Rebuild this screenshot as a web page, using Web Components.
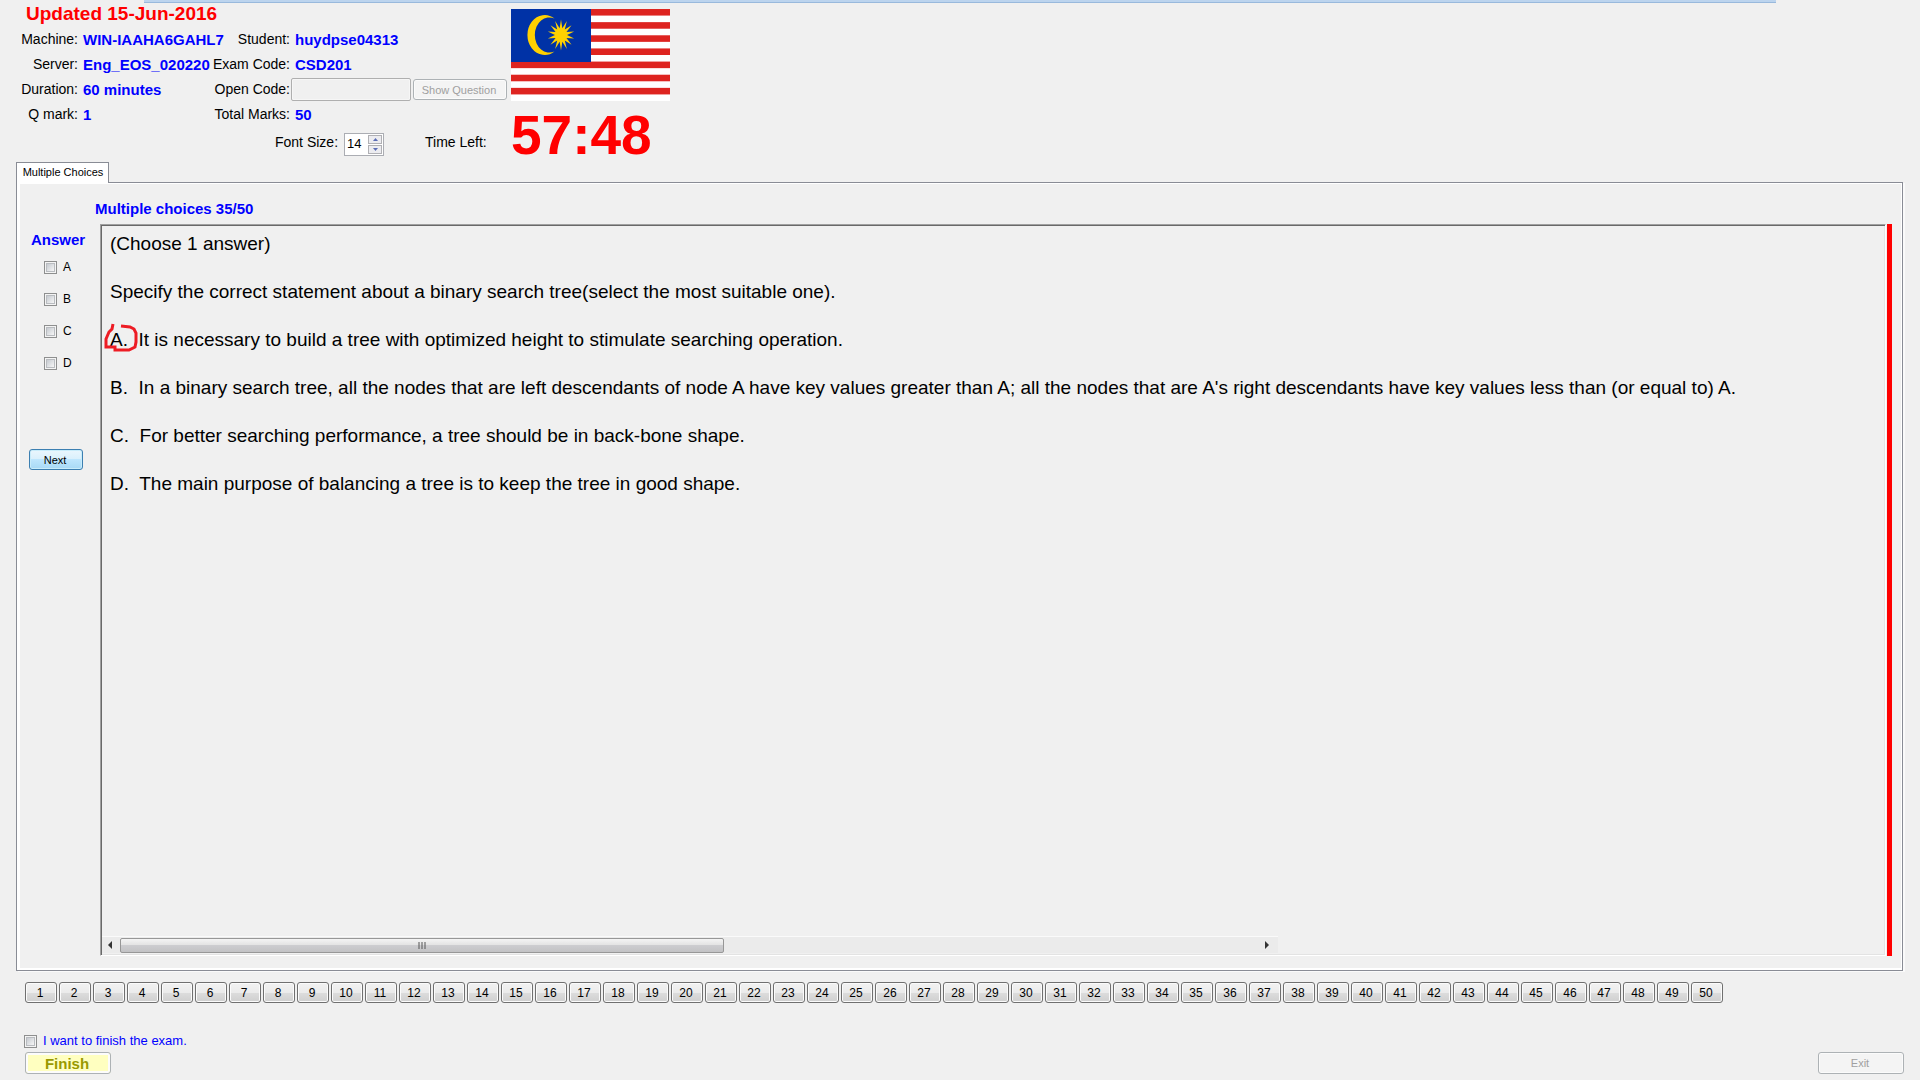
<!DOCTYPE html>
<html lang="en">
<head>
<meta charset="utf-8">
<title>Exam client</title>
<style>
  html { background: #f0f0f0; }
  body { margin: 0; font-family: "Liberation Sans", Arial, sans-serif; font-size: 14px; color: #000; }
</style>
</head>
<body>
<exam-app></exam-app>

<script>
const define = (name, html, setup) => {
  const template = document.createElement('template');
  template.innerHTML = html;
  customElements.define(name, class extends HTMLElement {
    constructor() {
      super();
      this.attachShadow({ mode: 'open' }).append(template.content.cloneNode(true));
    }
    connectedCallback() {
      if (setup && !this.ready) { this.ready = true; setup(this, this.shadowRoot); }
    }
  });
};

/* Glossy push button; kind = normal | primary | finish | ghost */
define('exam-button', `
<style>
  :host { display: inline-flex; height: 21px; }
  button {
    flex: 1; box-sizing: border-box; padding: 0 2px 0 0; font: 12px "Liberation Sans", Arial, sans-serif; color: #000;
    border: 1px solid #707070; border-radius: 3px; box-shadow: inset 0 0 0 1px #fbfbfb;
    background: linear-gradient(#f2f2f2, #ebebeb 50%, #dddddd 50%, #cfcfcf);
  }
  :host([kind=primary]) button {
    border-color: #3c7fb1; box-shadow: inset 0 0 0 1px #c8ecfa; font-size: 11px;
    background: linear-gradient(#eaf6fd, #d9f0fc 50%, #bee6fd 50%, #a7d9f5);
  }
  :host([kind=ghost]) button { border-color: #adb2b5; background: #f4f4f4; color: #a0a0a0; font-size: 11px; }
  :host([kind=finish]) button {
    border-color: #adb2b5; background: #ffffc0; color: #999900; font-size: 15px; font-weight: bold;
    box-shadow: inset 0 0 0 2px #fcfcfc;
  }
</style>
<button type="button"><slot></slot></button>`,
(host, root) => { root.querySelector('button').disabled = host.hasAttribute('disabled'); });

define('exam-check', `
<style>
  :host { display: block; }
  label { display: flex; align-items: center; gap: 6px; line-height: 16px; }
  input {
    appearance: none; margin: 0; width: 13px; height: 13px; box-sizing: border-box;
    border: 1px solid #8e8f8f; background: linear-gradient(135deg, #c6cad0, #f6f6f6) content-box, #f4f4f4; padding: 2px;
    box-shadow: inset 0 0 0 1px #f4f4f4, inset 0 0 0 2px #b9bcc0;
  }
</style>
<label><input type="checkbox"><span><slot></slot></span></label>`);

define('malaysia-flag', `
<style>
  :host { display: block; width: 159px; height: 92px; }
  svg { display: block; width: 100%; height: 100%; }
</style>
<svg viewBox="0 0 159 92" role="img" aria-label="Flag of Malaysia">
  <rect width="159" height="92" fill="#fff"/>
  <g id="stripes" fill="#de2420"></g>
  <rect width="80" height="53" fill="#0032a6"/>
  <path fill="#ffd100" d="M43.500 9.500A17.300 20 0 1 0 43.500 42.500A14.600 17.600 0 1 1 43.500 9.500Z"/>
  <polygon id="star" fill="#ffd100"/>
</svg>`,
(host, root) => {
  const stripes = root.getElementById('stripes');
  for (let i = 0; i < 7; i++) {
    const r = document.createElementNS('http://www.w3.org/2000/svg', 'rect');
    r.setAttribute('width', 159);
    r.setAttribute('height', 92 / 14);
    r.setAttribute('y', i * 92 / 7);
    stripes.append(r);
  }
  const points = [];
  for (let i = 0; i < 28; i++) {
    const k = i % 2 ? 0.45 : 1, a = i * Math.PI / 14;
    points.push((50 + 13.5 * k * Math.sin(a)).toFixed(2) + ',' + (26 - 15.5 * k * Math.cos(a)).toFixed(2));
  }
  root.getElementById('star').setAttribute('points', points.join(' '));
});

define('font-spinner', `
<style>
  :host { display: flex; box-sizing: border-box; width: 40px; height: 23px; border: 1px solid #abadb3; background: #fff; padding: 1px; }
  input {
    appearance: textfield; flex: 1; min-width: 0; border: 0; padding: 0 0 2px 1px; margin: 0; background: none;
    font: 13px "Liberation Sans", Arial, sans-serif; color: #000;
  }
  input::-webkit-inner-spin-button { display: none; }
  div { display: flex; flex-direction: column; gap: 1px; width: 14px; }
  button { flex: 1; padding: 0; border: 1px solid #b0b0b4; background: #ececf0; display: flex; align-items: center; justify-content: center; }
  svg { display: block; width: 5px; height: 3px; fill: #5b6db5; }
</style>
<input type="number" value="14" aria-label="Font size">
<div>
  <button type="button" aria-label="Increase"><svg viewBox="0 0 5 3"><path d="M0 3L2.500 0L5 3Z"/></svg></button>
  <button type="button" aria-label="Decrease"><svg viewBox="0 0 5 3"><path d="M0 0L2.500 3L5 0Z"/></svg></button>
</div>`);

define('exam-header', `
<style>
  :host { display: flex; }
  .info { width: 511px; }
  .strip {
    position: absolute; top: 0; left: 144px; right: 144px; height: 2px;
    background: #bcd4ee; border-bottom: 1px solid #99b9dc;
  }
  h1 { margin: 0; padding-left: 26px; font-size: 19px; line-height: 27px; color: #f00; }
  .grid { display: grid; grid-template-columns: 78px 134px 78px 1fr; grid-auto-rows: 25px; line-height: 25px; white-space: nowrap; }
  .grid > span { text-align: right; }
  .grid > b { padding-left: 5px; font-size: 15px; color: #00f; min-width: 0; }
  .clip { overflow: hidden; }
  .grid label { text-align: right; }
  .code { display: flex; align-items: center; gap: 2px; padding-left: 1px; }
  .code input {
    box-sizing: border-box; width: 120px; height: 23px; border: 1px solid #afafaf; border-radius: 2px;
    background: #f0f0f0; box-shadow: inset 0 0 0 1px #f6f6f6;
  }
  .code exam-button { width: 94px; }
  .size { display: flex; align-items: center; height: 35px; padding-left: 275px; }
  .size > span { line-height: 30px; align-self: flex-start; }
  .size font-spinner { margin: 0 41px 0 6px; }
  .side { padding-top: 9px; }
  time { display: block; font-size: 55px; line-height: 61px; height: 61px; font-weight: bold; color: #f00; padding-top: 4px; box-sizing: border-box; }
</style>
<div class="strip"></div>
<div class="info">
  <h1>Updated 15-Jun-2016</h1>
  <div class="grid">
    <span>Machine:</span><b>WIN-IAAHA6GAHL7</b><span>Student:</span><b>huydpse04313</b>
    <span>Server:</span><b class="clip">Eng_EOS_020220</b><span>Exam Code:</span><b>CSD201</b>
    <span>Duration:</span><b>60 minutes</b><label for="code">Open Code:</label>
    <div class="code"><input id="code" type="text" disabled><exam-button kind="ghost" disabled>Show Question</exam-button></div>
    <span>Q mark:</span><b>1</b><span>Total Marks:</span><b>50</b>
  </div>
  <div class="size"><span>Font Size:</span><font-spinner></font-spinner><span>Time Left:</span></div>
</div>
<div class="side">
  <malaysia-flag></malaysia-flag>
  <time>57:48</time>
</div>`);

define('answer-panel', `
<style>
  :host { display: flex; flex-direction: column; }
  h2 { margin: 0 0 1px; padding-left: 11px; font-size: 15px; line-height: 20px; color: #00f; }
  exam-check { padding: 8px 0 8px 24px; font-size: 12px; }
  exam-button { width: 54px; margin: 70px 0 0 9px; }
</style>
<h2>Answer</h2>
<exam-check>A</exam-check>
<exam-check>B</exam-check>
<exam-check>C</exam-check>
<exam-check>D</exam-check>
<exam-button kind="primary">Next</exam-button>`);

define('scroll-strip', `
<style>
  :host { display: flex; align-items: center; box-sizing: border-box; width: 66%; height: 17px; background: #ebebeb; border-top: 1px solid #fafafa; }
  .arrow { flex: none; display: block; width: 18px; height: 8px; fill: #333; }
  .track { flex: 1; display: flex; }
  .thumb {
    box-sizing: border-box; width: 53%; height: 15px; border: 1px solid #979797; border-radius: 2px;
    background: linear-gradient(#f4f4f4, #e4e4e4 45%, #cdcdd0 50%, #c2c2c4);
    display: flex; align-items: center; justify-content: center;
  }
  .thumb svg { width: 8px; height: 7px; }
</style>
<svg class="arrow" viewBox="0 0 18 8"><path d="M6 4L10 0V8Z"/></svg>
<div class="track"><div class="thumb"><svg viewBox="0 0 8 7"><path d="M1 0V7M4 0V7M7 0V7" stroke="#555"/></svg></div></div>
<svg class="arrow" viewBox="0 0 18 8"><path d="M9 4L5 0V8Z"/></svg>`);

define('question-view', `
<style>
  :host {
    display: flex; flex-direction: column; justify-content: space-between; box-sizing: border-box;
    border: 1px solid #a0a0a0; border-right-color: #fff; border-bottom-color: #fff;
    box-shadow: inset 1px 1px #696969, inset -1px -1px #e3e3e3;
    padding: 1px 1px 2px;
  }
  .text { padding: 6px 8px; font-size: 19px; line-height: 24px; white-space: pre-wrap; }
  p { margin: 0 0 24px; }
  .marked { position: relative; }
  .marked svg { position: absolute; left: -6px; top: -6px; width: 36px; height: 32px; fill: none; stroke: #ed1c24; stroke-width: 3; }
</style>
<div class="text"><p>(Choose 1 answer)</p><p>Specify the correct statement about a binary search tree(select the most suitable one).</p><p class="marked">A.  It is necessary to build a tree with optimized height to stimulate searching operation.<svg viewBox="0 0 36 32" aria-hidden="true"><path d="M9 2L8 7L5 10L2 17V25H11V28H25L31 25L32 20V11L30 7L26 5L17 4"/></svg></p><p>B.  In a binary search tree, all the nodes that are left descendants of node A have key values greater than A; all the nodes that are A's right descendants have key values less than (or equal to) A.</p><p>C.  For better searching performance, a tree should be in back-bone shape.</p><p>D.  The main purpose of balancing a tree is to keep the tree in good shape.</p></div>
<scroll-strip></scroll-strip>`);

define('exam-tabs', `
<style>
  :host { display: flex; flex-direction: column; padding: 0 17px 0 16px; }
  .tab {
    position: relative; align-self: flex-start; box-sizing: border-box; width: 93px; height: 21px; margin-bottom: -1px; padding: 0 0 2px 1px;
    border: 1px solid #898c95; border-bottom: 0; background: #fff; font: 11px "Liberation Sans", Arial, sans-serif; color: #000;
  }
  .panel {
    flex: 1; display: flex; flex-direction: column; padding: 15px 10px 14px 0;
    border: 1px solid #898c95; box-shadow: inset 3px 0 #fff, inset -1px 0 #fff, inset 0 1px #fff, inset 0 -2px #fff, 2px 1px #fafafa;
  }
  h2 { margin: 0; padding: 1px 0 5px 78px; font-size: 15px; line-height: 20px; color: #00f; }
  .body { flex: 1; display: flex; }
  answer-panel { flex: none; width: 80px; padding: 6px 0 0 3px; }
  question-view { flex: 1; }
  .bar { flex: none; width: 5px; margin-left: 1px; background: #f00; }
</style>
<button class="tab" type="button" role="tab" aria-selected="true">Multiple Choices</button>
<section class="panel">
  <h2>Multiple choices 35/50</h2>
  <div class="body">
    <answer-panel></answer-panel>
    <question-view></question-view>
    <div class="bar"></div>
  </div>
</section>`);

define('question-nav', `
<style>
  :host { display: flex; flex-wrap: wrap; gap: 2px; padding: 11px 25px 0; }
  exam-button { width: 32px; }
</style>`,
(host, root) => {
  for (let i = 1; i <= Number(host.getAttribute('count')); i++) {
    const b = document.createElement('exam-button');
    b.textContent = i;
    root.append(b);
  }
});

define('exam-footer', `
<style>
  :host { display: block; padding: 30px 16px 6px 24px; }
  exam-check { color: #00f; font-size: 13px; padding-bottom: 3px; }
  .row { display: flex; justify-content: space-between; padding-left: 1px; }
  exam-button { width: 86px; height: 22px; }
</style>
<exam-check>I want to finish the exam.</exam-check>
<div class="row">
  <exam-button kind="finish" disabled>Finish</exam-button>
  <exam-button kind="ghost" disabled>Exit</exam-button>
</div>`);

define('exam-app', `
<style>
  :host { display: flex; flex-direction: column; min-height: 100vh; position: relative; }
  exam-tabs { flex: 1; }
</style>
<exam-header></exam-header>
<exam-tabs></exam-tabs>
<question-nav count="50"></question-nav>
<exam-footer></exam-footer>`);
</script>
</body>
</html>
